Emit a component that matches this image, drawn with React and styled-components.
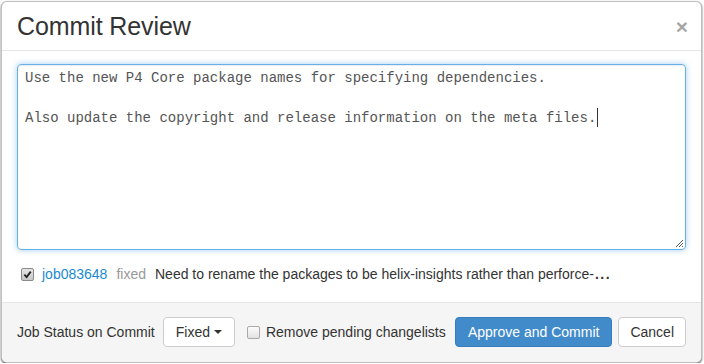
import React from 'react';
import styled, { createGlobalStyle } from 'styled-components';

const GlobalStyle = createGlobalStyle`
  body {
    margin: 0;
    background: #ffffff;
    font-family: "Liberation Sans", Helvetica, Arial, sans-serif;
    font-size: 14px;
    color: #333333;
  }
`;

const Pagina = styled.div`
  padding: 1px 0 0 1px;
`;

const Modal = styled.div`
  width: 701px;
  box-sizing: border-box;
  background: #ffffff;
  border: 1px solid rgba(0, 0, 0, 0.25);
  border-radius: 6px;
  box-shadow: 0 1px 2px rgba(0, 0, 0, 0.7);
  overflow: hidden;
`;

const Cabecera = styled.div`
  height: 48px;
  padding: 0 15px;
  display: flex;
  align-items: center;
  justify-content: space-between;
  border-bottom: 1px solid #e5e5e5;
`;

const Titulo = styled.h4`
  margin: 0;
  font-size: 25px;
  font-weight: 400;
  color: #333333;
  letter-spacing: -0.1px;
`;

const Cerrar = styled.button`
  background: none;
  border: 0;
  padding: 0;
  margin-right: -2px;
  font-family: "Liberation Sans", Arial, sans-serif;
  font-size: 21px;
  font-weight: 700;
  line-height: 1;
  color: #000000;
  opacity: 0.35;
  cursor: pointer;
`;

const Cuerpo = styled.div`
  padding: 13px 15px 18px;
`;

const Editor = styled.div`
  position: relative;
  height: 186px;
  box-sizing: border-box;
  border: 1px solid #66afe9;
  border-radius: 4px;
  box-shadow: inset 0 1px 1px rgba(0, 0, 0, 0.075), 0 0 6px rgba(102, 175, 233, 0.6);
  padding: 3px 7px;
  font-family: "Liberation Mono", "Courier New", monospace;
  font-size: 14px;
  line-height: 20px;
  color: #555555;
  white-space: pre-wrap;
`;

const Cursor = styled.span`
  display: inline-block;
  width: 1px;
  height: 19px;
  margin-left: 1px;
  vertical-align: -5px;
  background: #333333;
`;

const Agarre = styled.svg`
  position: absolute;
  right: 1px;
  bottom: 1px;
  width: 9px;
  height: 9px;
`;

const FilaTrabajo = styled.div`
  margin-top: 14px;
  height: 20px;
  display: flex;
  align-items: center;
  line-height: 20px;
  white-space: nowrap;
`;

const Caja = styled.span`
  display: inline-flex;
  align-items: center;
  justify-content: center;
  width: 13px;
  height: 13px;
  box-sizing: border-box;
  margin: 0 ${(p) => p.$derecha}px 0 ${(p) => p.$izquierda}px;
  border: 1px solid ${(p) => (p.$marcada ? '#8a8a8a' : '#a9a9a9')};
  border-radius: 2px;
  background: ${(p) =>
    p.$marcada
      ? 'linear-gradient(#e4e4e4, #c8c8c8)'
      : 'linear-gradient(#fbfbfb, #e2e2e2)'};

  svg {
    width: 9px;
    height: 9px;
  }
`;

const Enlace = styled.a`
  color: #1b8bd1;
  text-decoration: none;
`;

const Estado = styled.span`
  color: #999999;
  margin-left: 9px;
`;

const Descripcion = styled.span`
  color: #333333;
  margin-left: 9px;
`;

const Puntos = styled.b`
  letter-spacing: 1.5px;
  margin-left: 1px;
`;

const Pie = styled.div`
  display: flex;
  align-items: center;
  padding: 14px 15px 15px;
  background: #f5f5f5;
  border-top: 1px solid #e5e5e5;
`;

const Etiqueta = styled.span`
  color: #333333;
  margin-right: 8px;
`;

const Boton = styled.button`
  height: 30px;
  box-sizing: border-box;
  padding: 0 ${(p) => p.$relleno || 12}px;
  display: inline-flex;
  align-items: center;
  font-family: "Liberation Sans", Helvetica, Arial, sans-serif;
  font-size: 14px;
  border-radius: 4px;
  border: 1px solid ${(p) => (p.$primario ? '#357ebd' : '#cccccc')};
  background: ${(p) => (p.$primario ? '#428bca' : '#ffffff')};
  color: ${(p) => (p.$primario ? '#ffffff' : '#333333')};
  cursor: pointer;
  & + & {
    margin-left: 6px;
  }
`;

const Triangulo = styled.span`
  display: inline-block;
  width: 0;
  height: 0;
  margin-left: 4px;
  border-top: 4px solid #333333;
  border-left: 4px solid transparent;
  border-right: 4px solid transparent;
`;

const Opcion = styled.label`
  display: inline-flex;
  align-items: center;
  color: #333333;
`;

const Acciones = styled.div`
  margin-left: auto;
  display: flex;
`;

function Casilla({ marcada, izquierda = 0, derecha = 0 }) {
  return (
    <Caja $marcada={marcada} $izquierda={izquierda} $derecha={derecha}>
      {marcada && (
        <svg viewBox="0 0 10 10">
          <path d="M1.5 5.2 L4 7.8 L8.6 1.8" fill="none" stroke="#222" strokeWidth="2" />
        </svg>
      )}
    </Caja>
  );
}

export default function App() {
  return (
    <>
      <GlobalStyle />
      <Pagina>
        <Modal>
          <Cabecera>
            <Titulo>Commit Review</Titulo>
            <Cerrar>×</Cerrar>
          </Cabecera>
          <Cuerpo>
            <Editor>
              {'Use the new P4 Core package names for specifying dependencies.\n\nAlso update the copyright and release information on the meta files.'}
              <Cursor />
              <Agarre viewBox="0 0 9 9">
                <path d="M1 8 L8 1 M4 8 L8 4 M7 8 L8 7" stroke="#555" strokeWidth="1" />
              </Agarre>
            </Editor>
            <FilaTrabajo>
              <Casilla marcada izquierda={4} derecha={8} />
              <Enlace href="#">job083648</Enlace>
              <Estado>fixed</Estado>
              <Descripcion>
                Need to rename the packages to be helix-insights rather than perforce-<Puntos>...</Puntos>
              </Descripcion>
            </FilaTrabajo>
          </Cuerpo>
          <Pie>
            <Etiqueta>Job Status on Commit</Etiqueta>
            <Boton>
              Fixed
              <Triangulo />
            </Boton>
            <Opcion>
              <Casilla izquierda={12} derecha={6} />
              Remove pending changelists
            </Opcion>
            <Acciones>
              <Boton $primario>Approve and Commit</Boton>
              <Boton $relleno={11}>Cancel</Boton>
            </Acciones>
          </Pie>
        </Modal>
      </Pagina>
    </>
  );
}
